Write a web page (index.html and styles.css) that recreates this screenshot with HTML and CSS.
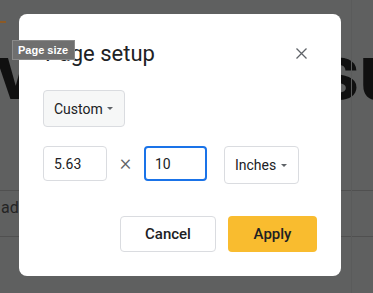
FILE: index.html
```html
<!DOCTYPE html>
<html>
<head>
<meta charset="utf-8">
<link rel="stylesheet" href="styles.css">
</head>
<body>
<div class="page">
  <div class="accent"></div>
  <div class="hero">
    <span class="hero-left">ve</span>
    <span class="hero-right">su</span>
  </div>
  <div class="rule"></div>
  <div class="row-text">ad</div>
  <div class="rule rule-2"></div>
  <div class="vline"></div>
</div>

<div class="dialog">
  <div class="dialog-head">
    <h1 class="title">Page setup</h1>
    <button class="close" aria-label="Close">
      <svg width="11" height="11" viewBox="0 0 11 11"><path d="M0.5 0.5L10.5 10.5M10.5 0.5L0.5 10.5" stroke="#5f6368" stroke-width="1.3" fill="none"/></svg>
    </button>
  </div>
  <div class="select select-custom">
    <span>Custom</span>
    <span class="caret"></span>
  </div>
  <div class="size-row">
    <div class="field">5.63</div>
    <span class="times">×</span>
    <div class="field field-focus">10</div>
    <div class="select select-units">
      <span>Inches</span>
      <span class="caret"></span>
    </div>
  </div>
  <div class="actions">
    <button class="btn btn-cancel">Cancel</button>
    <button class="btn btn-apply">Apply</button>
  </div>
</div>

<div class="tooltip">Page size</div>
</body>
</html>
```

FILE: styles.css
```css
* { box-sizing: border-box; }
html, body {
  margin: 0;
  padding: 0;
}
body {
  width: 373px;
  height: 293px;
  overflow: hidden;
  position: relative;
  background: #5f6060;
  font-family: Roboto, "Liberation Sans", Arial, sans-serif;
}

/* dimmed page underneath */
.page {
  position: relative;
  height: 293px;
}
.accent {
  position: absolute;
  left: 0;
  top: 21px;
  width: 6px;
  height: 2px;
  background: #8c5a26;
}
.hero {
  display: flex;
  justify-content: space-between;
  padding-top: 28px;
  height: 130px;
  font-family: Roboto, "Liberation Sans", sans-serif;
  font-weight: 700;
  font-size: 78px;
  line-height: 90px;
  color: #101010;
  white-space: nowrap;
  overflow: hidden;
}
.hero-left { margin-left: -4px; }
.hero-right { margin-right: -30px; }
.rule {
  position: absolute;
  left: 0;
  right: 0;
  top: 190px;
  height: 1px;
  background: #505050;
}
.rule-2 { top: 236px; }
.row-text {
  position: absolute;
  left: 1px;
  top: 198px;
  font-size: 16px;
  color: #242424;
}
.vline {
  position: absolute;
  top: 0;
  bottom: 0;
  left: 351px;
  width: 1px;
  background: #5a5b5b;
}

/* dialog */
.dialog {
  position: absolute;
  left: 19px;
  top: 14px;
  width: 322px;
  height: 262px;
  background: #fff;
  border-radius: 8px;
  padding: 26px 24px 24px 24px;
  display: flex;
  flex-direction: column;
}
.dialog-head {
  display: flex;
  justify-content: space-between;
  align-items: center;
  height: 28px;
}
.title {
  margin: 0 0 0 2px;
  font-size: 22px;
  font-weight: 400;
  color: #202124;
  line-height: 28px;
}
.close {
  border: 0;
  background: none;
  padding: 0;
  width: 11px;
  height: 11px;
  margin-right: 10px;
  margin-bottom: 1px;
  display: flex;
}

.select {
  display: flex;
  align-items: center;
  justify-content: space-between;
  border: 1px solid #dadce0;
  border-radius: 4px;
  font-size: 14px;
  color: #202124;
  padding: 0 11px 0 10px;
}
.select-custom {
  margin-top: 22px;
  width: 82px;
  height: 37px;
  background: #f6f7f7;
}
.caret {
  width: 0;
  height: 0;
  border-left: 3.5px solid transparent;
  border-right: 3.5px solid transparent;
  border-top: 3.5px solid #5f6368;
}

.size-row {
  display: flex;
  align-items: flex-start;
  margin-top: 19px;
}
.field {
  width: 64px;
  height: 35px;
  border: 1px solid #dadce0;
  border-radius: 4px;
  font-size: 14px;
  color: #202124;
  display: flex;
  align-items: center;
  padding-left: 10px;
}
.field-focus {
  width: 63px;
  height: 35px;
  border: 2px solid #1a73e8;
  padding-left: 9px;
}
.times {
  width: 37px;
  text-align: center;
  font-size: 22px;
  font-weight: 300;
  color: #5f6368;
  line-height: 34px;
}
.select-units {
  margin-left: 17px;
  width: 75px;
  height: 38px;
  background: #fff;
}

.actions {
  margin-top: auto;
  display: flex;
  justify-content: flex-end;
  gap: 12px;
}
.btn {
  height: 36px;
  border-radius: 4px;
  font-family: Roboto, "Liberation Sans", sans-serif;
  font-size: 15px;
  font-weight: 500;
  color: #202124;
  cursor: pointer;
}
.btn-cancel {
  width: 96px;
  background: #fff;
  border: 1px solid #dadce0;
}
.btn-apply {
  width: 89px;
  background: #f9bc2f;
  border: 0;
}

/* tooltip */
.tooltip {
  position: absolute;
  left: 12px;
  top: 40px;
  width: 63px;
  height: 20px;
  background: #6f6f6f;
  border: 1px solid #8a8a8a;
  color: #fff;
  font-family: "Liberation Sans", Arial, sans-serif;
  font-weight: 700;
  font-size: 11px;
  line-height: 18px;
  padding-left: 5px;
  white-space: nowrap;
}
```
